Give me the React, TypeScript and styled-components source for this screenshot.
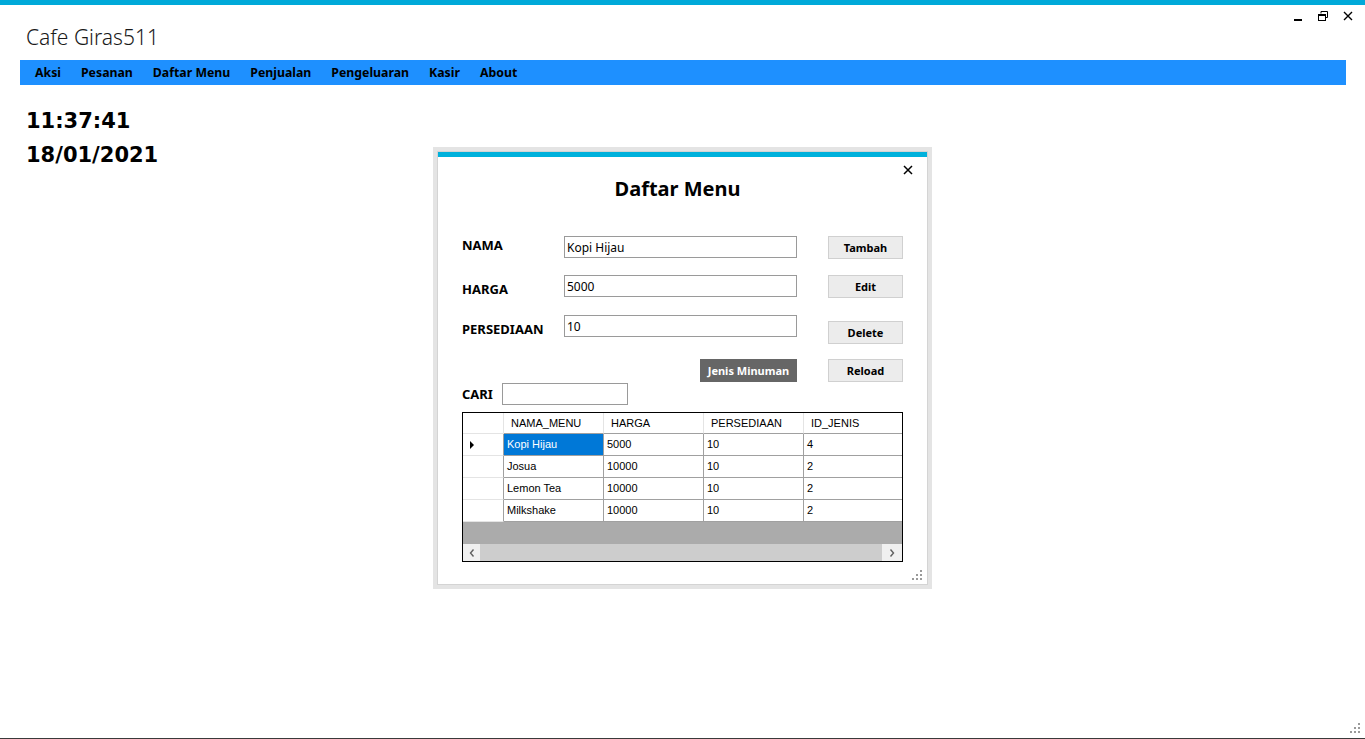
import { FC } from "react";
import styled, { createGlobalStyle } from "styled-components";

const GlobalStyle = createGlobalStyle`
  html, body {
    margin: 0;
    padding: 0;
    background: #ffffff;
    overflow: hidden;
  }
  * {
    box-sizing: border-box;
  }
`;

const Screen = styled.div`
  position: relative;
  width: 1365px;
  height: 739px;
  display: flex;
  flex-direction: column;
  border-top: 5px solid #00a9d9;
  border-bottom: 1px solid #3a3a3a;
  background: #ffffff;
  font-family: "Noto Sans", "Open Sans", sans-serif;
  color: #000;
`;

const TitleBar = styled.div`
  display: flex;
  justify-content: space-between;
  align-items: flex-start;
  height: 55px;
`;

const AppTitle = styled.div`
  padding: 18px 0 0 26px;
  font-size: 21px;
  font-weight: 300;
  line-height: 28px;
  color: #1a1a1a;
`;

const WindowControls = styled.div`
  display: flex;
  padding-right: 5px;
`;

const ControlButton = styled.div`
  width: 25px;
  height: 21px;
  display: flex;
  align-items: center;
  justify-content: center;
`;

const MenuBar = styled.nav`
  margin: 0 19px 0 20px;
  height: 25px;
  background: #1e90ff;
  display: flex;
  align-items: center;
  padding-left: 5px;
`;

const MenuItem = styled.span`
  padding: 0 10px;
  font-size: 12.3px;
  font-weight: 700;
  line-height: 25px;
  color: #000;
`;

const Desktop = styled.main`
  flex: 1;
  display: grid;
  grid-template-columns: 1fr 499px 1fr;
  align-items: start;
`;

const ClockPanel = styled.div`
  padding: 19px 0 0 26px;
  font-family: "DejaVu Sans", sans-serif;
  font-size: 21px;
  font-weight: 700;
  line-height: 34px;
  color: #000;
`;

const DialogFrame = styled.section`
  margin-top: 62px;
  width: 499px;
  height: 442px;
  padding: 4px;
  background: #e4e4e4;
`;

const DialogBody = styled.div`
  position: relative;
  height: 100%;
  border: 1px solid #d4d4d4;
  background: #ffffff;
`;

const CaptionStrip = styled.div`
  height: 5px;
  background: #00b1dc;
`;

const CloseButton = styled.div`
  position: absolute;
  top: 13px;
  right: 14px;
  width: 10px;
  height: 10px;
  display: flex;
`;

const DialogTitle = styled.h1`
  margin: 20px 0 0;
  padding-right: 10px;
  text-align: center;
  font-size: 20px;
  font-weight: 700;
  line-height: 24px;
`;

const Form = styled.div`
  margin-top: 35px;
  padding-left: 24px;
`;

const FieldRow = styled.div<{ $gap: number }>`
  display: grid;
  grid-template-columns: 102px 233px 31px 75px;
  align-items: start;
  margin-top: ${(p) => p.$gap}px;
`;

const FieldLabel = styled.label<{ $offset: number }>`
  padding-top: ${(p) => p.$offset}px;
  font-size: 13px;
  font-weight: 700;
  line-height: 16px;
`;

const TextBox = styled.input<{ $width?: number }>`
  width: ${(p) => (p.$width ? `${p.$width}px` : "100%")};
  height: 22px;
  margin: 0;
  padding: 0 2px;
  border: 1px solid #9a9a9a;
  border-radius: 0;
  background: #fff;
  font-family: "Noto Sans", sans-serif;
  font-size: 12px;
  color: #000;
  outline: none;
`;

const ActionButton = styled.button<{ $offset?: number }>`
  grid-column: 4;
  margin-top: ${(p) => p.$offset ?? 0}px;
  height: 23px;
  padding: 0;
  border: 1px solid #d0d0d0;
  background: #ececec;
  font-family: "Noto Sans", sans-serif;
  font-size: 11px;
  font-weight: 700;
  color: #000;
`;

const DarkButton = styled.button`
  grid-column: 2;
  justify-self: end;
  width: 97px;
  height: 23px;
  padding: 0;
  border: none;
  background: #666666;
  font-family: "Noto Sans", sans-serif;
  font-size: 11px;
  font-weight: 700;
  color: #fff;
`;

const SearchRow = styled.div`
  display: flex;
  align-items: flex-start;
  margin-top: 1px;
`;

const SearchLabel = styled(FieldLabel)`
  width: 40px;
`;

const Table = styled.div`
  margin: 7px 0 0 24px;
  width: 441px;
  border: 1px solid #000;
  background: #fff;
  font-family: "Liberation Sans", Arial, sans-serif;
  font-size: 11px;
  color: #000;
`;

const TableRow = styled.div<{ $height: number }>`
  display: grid;
  grid-template-columns: 41px 100px 100px 100px 98px;
  height: ${(p) => p.$height}px;
`;

const HeaderCell = styled.div`
  padding-left: 7px;
  border-right: 1px solid #e4e4e4;
  border-bottom: 1px solid #a0a0a0;
  line-height: 20px;
  white-space: nowrap;
  overflow: hidden;
  &:first-child {
    border-bottom-color: #e4e4e4;
  }
  &:last-child {
    border-right: none;
  }
`;

const RowHeader = styled.div`
  position: relative;
  border-right: 1px solid #a0a0a0;
  border-bottom: 1px solid #e4e4e4;
`;

const CurrentRowMarker = styled.span`
  position: absolute;
  left: 7px;
  top: 7px;
  width: 0;
  height: 0;
  border-top: 4px solid transparent;
  border-bottom: 4px solid transparent;
  border-left: 4px solid #000;
`;

const DataCell = styled.div<{ $selected?: boolean }>`
  padding-left: 3px;
  border-right: 1px solid #a0a0a0;
  border-bottom: 1px solid #a0a0a0;
  line-height: 21px;
  white-space: nowrap;
  overflow: hidden;
  background: ${(p) => (p.$selected ? "#0078d7" : "#fff")};
  color: ${(p) => (p.$selected ? "#fff" : "#000")};
  &:last-child {
    border-right: none;
  }
`;

const EmptyArea = styled.div`
  height: 22px;
  background: #ababab;
`;

const HScrollBar = styled.div`
  display: grid;
  grid-template-columns: 17px 1fr 20px;
  height: 17px;
  background: #f0f0f0;
`;

const ScrollArrow = styled.div`
  display: flex;
  align-items: center;
  justify-content: center;
`;

const ScrollThumb = styled.div`
  background: #cdcdcd;
`;

const SizeGrip = styled.svg<{ $right: number; $bottom: number }>`
  position: absolute;
  right: ${(p) => p.$right}px;
  bottom: ${(p) => p.$bottom}px;
`;

type MenuRow = {
  nama: string;
  harga: string;
  persediaan: string;
  idJenis: string;
};

const menuItems = ["Aksi", "Pesanan", "Daftar Menu", "Penjualan", "Pengeluaran", "Kasir", "About"];

const rows: MenuRow[] = [
  { nama: "Kopi Hijau", harga: "5000", persediaan: "10", idJenis: "4" },
  { nama: "Josua", harga: "10000", persediaan: "10", idJenis: "2" },
  { nama: "Lemon Tea", harga: "10000", persediaan: "10", idJenis: "2" },
  { nama: "Milkshake", harga: "10000", persediaan: "10", idJenis: "2" },
];

const Grip: FC<{ right: number; bottom: number }> = ({ right, bottom }) => (
  <SizeGrip $right={right} $bottom={bottom} width="10" height="10" viewBox="0 0 10 10">
    <g fill="#9a9a9a">
      <rect x="8" y="0" width="2" height="2" />
      <rect x="4" y="4" width="2" height="2" />
      <rect x="8" y="4" width="2" height="2" />
      <rect x="0" y="8" width="2" height="2" />
      <rect x="4" y="8" width="2" height="2" />
      <rect x="8" y="8" width="2" height="2" />
    </g>
  </SizeGrip>
);

const MenuGrid: FC = () => (
  <Table>
    <TableRow $height={21}>
      <HeaderCell />
      <HeaderCell>NAMA_MENU</HeaderCell>
      <HeaderCell>HARGA</HeaderCell>
      <HeaderCell>PERSEDIAAN</HeaderCell>
      <HeaderCell>ID_JENIS</HeaderCell>
    </TableRow>
    {rows.map((r, i) => (
      <TableRow $height={22} key={r.nama}>
        <RowHeader>{i === 0 && <CurrentRowMarker />}</RowHeader>
        <DataCell $selected={i === 0}>{r.nama}</DataCell>
        <DataCell>{r.harga}</DataCell>
        <DataCell>{r.persediaan}</DataCell>
        <DataCell>{r.idJenis}</DataCell>
      </TableRow>
    ))}
    <EmptyArea />
    <HScrollBar>
      <ScrollArrow>
        <svg width="6" height="8" viewBox="0 0 6 8">
          <path d="M4.5 0.5 L1.5 4 L4.5 7.5" fill="none" stroke="#606060" strokeWidth="1.4" />
        </svg>
      </ScrollArrow>
      <ScrollThumb />
      <ScrollArrow>
        <svg width="6" height="8" viewBox="0 0 6 8">
          <path d="M1.5 0.5 L4.5 4 L1.5 7.5" fill="none" stroke="#606060" strokeWidth="1.4" />
        </svg>
      </ScrollArrow>
    </HScrollBar>
  </Table>
);

const DaftarMenuDialog: FC = () => (
  <DialogFrame>
    <DialogBody>
      <CaptionStrip />
      <CloseButton>
        <svg width="10" height="10" viewBox="0 0 10 10">
          <path d="M1 1 L9 9 M9 1 L1 9" stroke="#000" strokeWidth="1.5" />
        </svg>
      </CloseButton>
      <DialogTitle>Daftar Menu</DialogTitle>
      <Form>
        <FieldRow $gap={0}>
          <FieldLabel $offset={1}>NAMA</FieldLabel>
          <TextBox defaultValue="Kopi Hijau" />
          <ActionButton>Tambah</ActionButton>
        </FieldRow>
        <FieldRow $gap={16}>
          <FieldLabel $offset={6}>HARGA</FieldLabel>
          <TextBox defaultValue="5000" />
          <ActionButton>Edit</ActionButton>
        </FieldRow>
        <FieldRow $gap={17}>
          <FieldLabel $offset={6}>PERSEDIAAN</FieldLabel>
          <TextBox defaultValue="10" />
          <ActionButton $offset={6}>Delete</ActionButton>
        </FieldRow>
        <FieldRow $gap={15}>
          <DarkButton>Jenis Minuman</DarkButton>
          <ActionButton>Reload</ActionButton>
        </FieldRow>
        <SearchRow>
          <SearchLabel $offset={3}>CARI</SearchLabel>
          <TextBox $width={126} defaultValue="" />
        </SearchRow>
      </Form>
      <MenuGrid />
      <Grip right={5} bottom={4} />
    </DialogBody>
  </DialogFrame>
);

export default function App() {
  return (
    <>
      <GlobalStyle />
      <Screen>
        <TitleBar>
          <AppTitle>Cafe Giras511</AppTitle>
          <WindowControls>
            <ControlButton>
              <svg width="10" height="10" viewBox="0 0 10 10">
                <rect x="1" y="8" width="8" height="2" fill="#000" />
              </svg>
            </ControlButton>
            <ControlButton>
              <svg width="10" height="10" viewBox="0 0 10 10">
                <path d="M3 2.5 V0.5 H9.5 V6.5 H7.5" fill="none" stroke="#000" strokeWidth="1" />
                <rect x="0.5" y="3.5" width="7" height="6" fill="none" stroke="#000" strokeWidth="1" />
                <rect x="0.5" y="3" width="7" height="2" fill="#000" />
              </svg>
            </ControlButton>
            <ControlButton>
              <svg width="10" height="10" viewBox="0 0 10 10">
                <path d="M1 1 L9 9 M9 1 L1 9" stroke="#000" strokeWidth="1.4" />
              </svg>
            </ControlButton>
          </WindowControls>
        </TitleBar>
        <MenuBar>
          {menuItems.map((m) => (
            <MenuItem key={m}>{m}</MenuItem>
          ))}
        </MenuBar>
        <Desktop>
          <ClockPanel>
            <div>11:37:41</div>
            <div>18/01/2021</div>
          </ClockPanel>
          <DaftarMenuDialog />
          <div />
        </Desktop>
        <Grip right={5} bottom={5} />
      </Screen>
    </>
  );
}
